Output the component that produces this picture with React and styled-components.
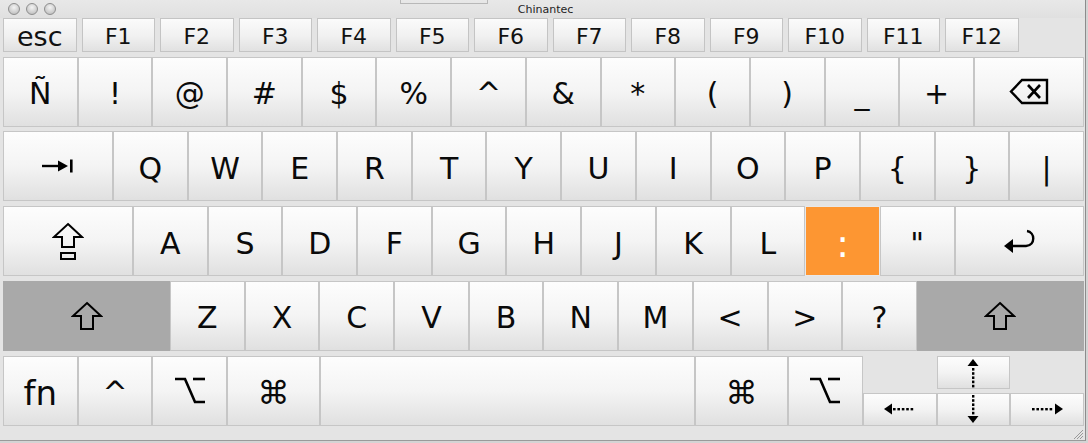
import React from 'react';
import styled, { createGlobalStyle } from 'styled-components';

const GlobalStyle = createGlobalStyle`
  html, body { margin: 0; padding: 0; background: #d4d4d4; }
  body { font-family: "DejaVu Sans", "Liberation Sans", sans-serif; }
  * { box-sizing: border-box; }
`;

const Window = styled.div`
  width: 1086px;
  height: 441px;
  background: #e4e4e4;
  border-right: 1px solid #8c8c8c;
  border-bottom: 1px solid #9a9a9a;
  display: flex;
  flex-direction: column;
  overflow: hidden;
`;

const TitleBar = styled.div`
  position: relative;
  height: 18px;
  flex: 0 0 18px;
  display: flex;
  align-items: center;
  justify-content: center;
  background: linear-gradient(#e8e8e8, #e0e0e0);
`;

const Lights = styled.div`
  position: absolute;
  left: 8px;
  top: 3px;
  display: flex;
  gap: 6px;
`;

const Light = styled.span`
  width: 12px;
  height: 12px;
  border-radius: 50%;
  border: 1px solid #8e8e8e;
  background: radial-gradient(circle at 50% 35%, #f4f4f4, #c8c8c8 70%, #b4b4b4);
`;

const Title = styled.span`
  font-size: 11px;
  color: #1e1e1e;
  margin-left: 6px;
`;

const BackTab = styled.span`
  position: absolute;
  left: 400px;
  top: -8px;
  width: 88px;
  height: 12px;
  border: 1px solid #b8b8b8;
  border-top: none;
  font-size: 11px;
  color: #555;
  padding-left: 18px;
  line-height: 10px;
`;

const FnRow = styled.div`
  display: flex;
  gap: 5px;
  height: 34px;
  flex: 0 0 34px;
  padding-left: 3px;
  margin-bottom: 4.5px;
`;

const FnKey = styled.div`
  width: 73.5px;
  height: 100%;
  display: flex;
  align-items: center;
  justify-content: center;
  border: 1px solid #c4c4c4;
  background: linear-gradient(#fbfbfb, #f0f0f0 55%, #e1e1e1);
  font-size: ${p => p.$size || 22}px;
  color: #111;
  padding-top: 3px;
`;

const Keyboard = styled.div`
  display: flex;
  flex-direction: column;
  gap: 4.75px;
  padding: 0 1px 0 3px;
`;

const Row = styled.div`
  display: flex;
  height: 70px;
`;

const toneBg = {
  normal: 'linear-gradient(#fdfdfd, #f4f4f4 50%, #e0e0e0)',
  gray: '#a9a9a9',
  orange: '#fd9632',
};

const Key = styled.div`
  flex: ${p => (p.$grow ? '1 1 0' : `0 0 ${p.$w || 74.7}px`)};
  height: 100%;
  display: flex;
  align-items: center;
  justify-content: center;
  padding-top: ${p => (p.$icon ? 0 : 5)}px;
  border: 1px solid ${p => (p.$tone === 'gray' ? '#a9a9a9' : p.$tone === 'orange' ? '#e8e8e8' : '#c6c6c6')};
  background: ${p => toneBg[p.$tone || 'normal']};
  color: ${p => (p.$tone === 'orange' ? '#ffffff' : '#0a0a0a')};
  font-size: ${p => p.$size || 30}px;
  line-height: 1;
`;

const ArrowCluster = styled.div`
  flex: 1 1 0;
  display: grid;
  grid-template-columns: repeat(3, 1fr);
  grid-template-rows: 33px 33px;
  row-gap: 4px;
`;

const ArrowKey = styled.div`
  grid-column: ${p => p.$col};
  grid-row: ${p => p.$row};
  display: flex;
  align-items: center;
  justify-content: center;
  border: 1px solid #c6c6c6;
  background: linear-gradient(#fdfdfd, #f3f3f3 50%, #e0e0e0);
`;

const StatusBar = styled.div`
  flex: 1 1 auto;
  display: flex;
  justify-content: flex-end;
  align-items: flex-end;
  padding: 0 2px 1px 0;
`;

const stroke = { fill: 'none', stroke: '#000', strokeWidth: 2 };

const TabIcon = () => (
  <svg width="34" height="16" viewBox="0 0 34 16">
    <line x1="1" y1="8" x2="22" y2="8" stroke="#000" strokeWidth="2.4" />
    <polygon points="27,8 17,2.5 17,13.5" fill="#000" />
    <rect x="29" y="1.5" width="2.6" height="13" fill="#000" />
  </svg>
);

const CapsIcon = () => (
  <svg width="32" height="38" viewBox="0 0 32 38">
    <polygon points="16,2 30,15 22,15 22,25 10,25 10,15 2,15" {...stroke} strokeLinejoin="miter" />
    <rect x="9" y="31" width="14" height="6" {...stroke} />
  </svg>
);

const ShiftIcon = () => (
  <svg width="32" height="30" viewBox="0 0 32 30">
    <polygon points="16,2 30,15 22,15 22,28 10,28 10,15 2,15" {...stroke} strokeLinejoin="miter" />
  </svg>
);

const BackspaceIcon = () => (
  <svg width="40" height="29" viewBox="0 0 40 29">
    <polygon points="2,14.5 13,3 38,3 38,26 13,26" {...stroke} strokeWidth="2.4" />
    <line x1="19" y1="8" x2="31" y2="21" stroke="#000" strokeWidth="2.6" />
    <line x1="31" y1="8" x2="19" y2="21" stroke="#000" strokeWidth="2.6" />
  </svg>
);

const ReturnIcon = () => (
  <svg width="34" height="24" viewBox="0 0 34 24">
    <path d="M25 2 C33 3 34 16 24 17 L9 17" {...stroke} strokeWidth="2.4" />
    <polygon points="2,17 11,10 11,24" fill="#000" />
  </svg>
);

const OptionIcon = () => (
  <svg width="32" height="27" viewBox="0 0 32 27">
    <path d="M1 2 L11 2 L21 25 L31 25" {...stroke} strokeWidth="2.6" />
    <line x1="19" y1="2" x2="31" y2="2" stroke="#000" strokeWidth="2.6" />
  </svg>
);

const dots = (count, fn) => Array.from({ length: count }, (_, i) => fn(i));

const HArrow = ({ dir }) => (
  <svg width="32" height="12" viewBox="0 0 32 12">
    {dir === 'left' ? (
      <>
        <polygon points="0,6 8,0.5 8,11.5" fill="#000" />
        {dots(5, i => <rect key={i} x={9 + i * 4.4} y="5" width="2.6" height="2.4" fill="#000" />)}
      </>
    ) : (
      <>
        <polygon points="32,6 24,0.5 24,11.5" fill="#000" />
        {dots(5, i => <rect key={i} x={1 + i * 4.4} y="5" width="2.6" height="2.4" fill="#000" />)}
      </>
    )}
  </svg>
);

const VArrow = ({ dir }) => (
  <svg width="12" height="31" viewBox="0 0 12 31" style={{ alignSelf: dir === 'up' ? 'flex-start' : 'flex-end' }}>
    {dir === 'up' ? (
      <>
        <polygon points="6,2 0.5,9 11.5,9" fill="#000" />
        {dots(5, i => <rect key={i} x="5" y={11 + i * 4.2} width="2.4" height="2.6" fill="#000" />)}
      </>
    ) : (
      <>
        <polygon points="6,29 0.5,22 11.5,22" fill="#000" />
        {dots(5, i => <rect key={i} x="5" y={1 + i * 4.2} width="2.4" height="2.6" fill="#000" />)}
      </>
    )}
  </svg>
);

const Grip = () => (
  <svg width="10" height="10" viewBox="0 0 10 10">
    <line x1="1" y1="10" x2="10" y2="1" stroke="#999" strokeWidth="1" />
    <line x1="4" y1="10" x2="10" y2="4" stroke="#999" strokeWidth="1" />
    <line x1="7" y1="10" x2="10" y2="7" stroke="#999" strokeWidth="1" />
  </svg>
);

const fnKeys = ['F1', 'F2', 'F3', 'F4', 'F5', 'F6', 'F7', 'F8', 'F9', 'F10', 'F11', 'F12'];
const numRow = ['Ñ', '!', '@', '#', '$', '%', '^', '&', '*', '(', ')', '_', '+'];
const qRow = ['Q', 'W', 'E', 'R', 'T', 'Y', 'U', 'I', 'O', 'P', '{', '}', '|'];
const aRow = ['A', 'S', 'D', 'F', 'G', 'H', 'J', 'K', 'L'];
const zRow = ['Z', 'X', 'C', 'V', 'B', 'N', 'M', '<', '>', '?'];

export default function App() {
  return (
    <>
      <GlobalStyle />
      <Window>
        <TitleBar>
          <Lights>
            <Light />
            <Light />
            <Light />
          </Lights>
          <BackTab>Untitled2</BackTab>
          <Title>Chinantec</Title>
        </TitleBar>
        <FnRow>
          <FnKey $size={27}>esc</FnKey>
          {fnKeys.map(k => (
            <FnKey key={k}>{k}</FnKey>
          ))}
        </FnRow>
        <Keyboard>
          <Row>
            {numRow.map(k => (
              <Key key={k}>{k}</Key>
            ))}
            <Key $grow $icon>
              <BackspaceIcon />
            </Key>
          </Row>
          <Row>
            <Key $w={110} $icon>
              <TabIcon />
            </Key>
            {qRow.map(k => (
              <Key key={k} $grow={k === '|'}>{k}</Key>
            ))}
          </Row>
          <Row>
            <Key $w={130} $icon>
              <CapsIcon />
            </Key>
            {aRow.map(k => (
              <Key key={k}>{k}</Key>
            ))}
            <Key $tone="orange" $size={38}>:</Key>
            <Key>"</Key>
            <Key $grow $icon>
              <ReturnIcon />
            </Key>
          </Row>
          <Row>
            <Key $w={167} $tone="gray" $icon>
              <ShiftIcon />
            </Key>
            {zRow.map(k => (
              <Key key={k}>{k}</Key>
            ))}
            <Key $grow $tone="gray" $icon>
              <ShiftIcon />
            </Key>
          </Row>
          <Row>
            <Key $size={34}>fn</Key>
            <Key>^</Key>
            <Key $icon>
              <OptionIcon />
            </Key>
            <Key $w={93} $size={32}>⌘</Key>
            <Key $w={375} $icon />
            <Key $w={93} $size={32}>⌘</Key>
            <Key $icon>
              <OptionIcon />
            </Key>
            <ArrowCluster>
              <ArrowKey $col={2} $row={1}>
                <VArrow dir="up" />
              </ArrowKey>
              <ArrowKey $col={1} $row={2}>
                <HArrow dir="left" />
              </ArrowKey>
              <ArrowKey $col={2} $row={2}>
                <VArrow dir="down" />
              </ArrowKey>
              <ArrowKey $col={3} $row={2}>
                <HArrow dir="right" />
              </ArrowKey>
            </ArrowCluster>
          </Row>
        </Keyboard>
        <StatusBar>
          <Grip />
        </StatusBar>
      </Window>
    </>
  );
}
